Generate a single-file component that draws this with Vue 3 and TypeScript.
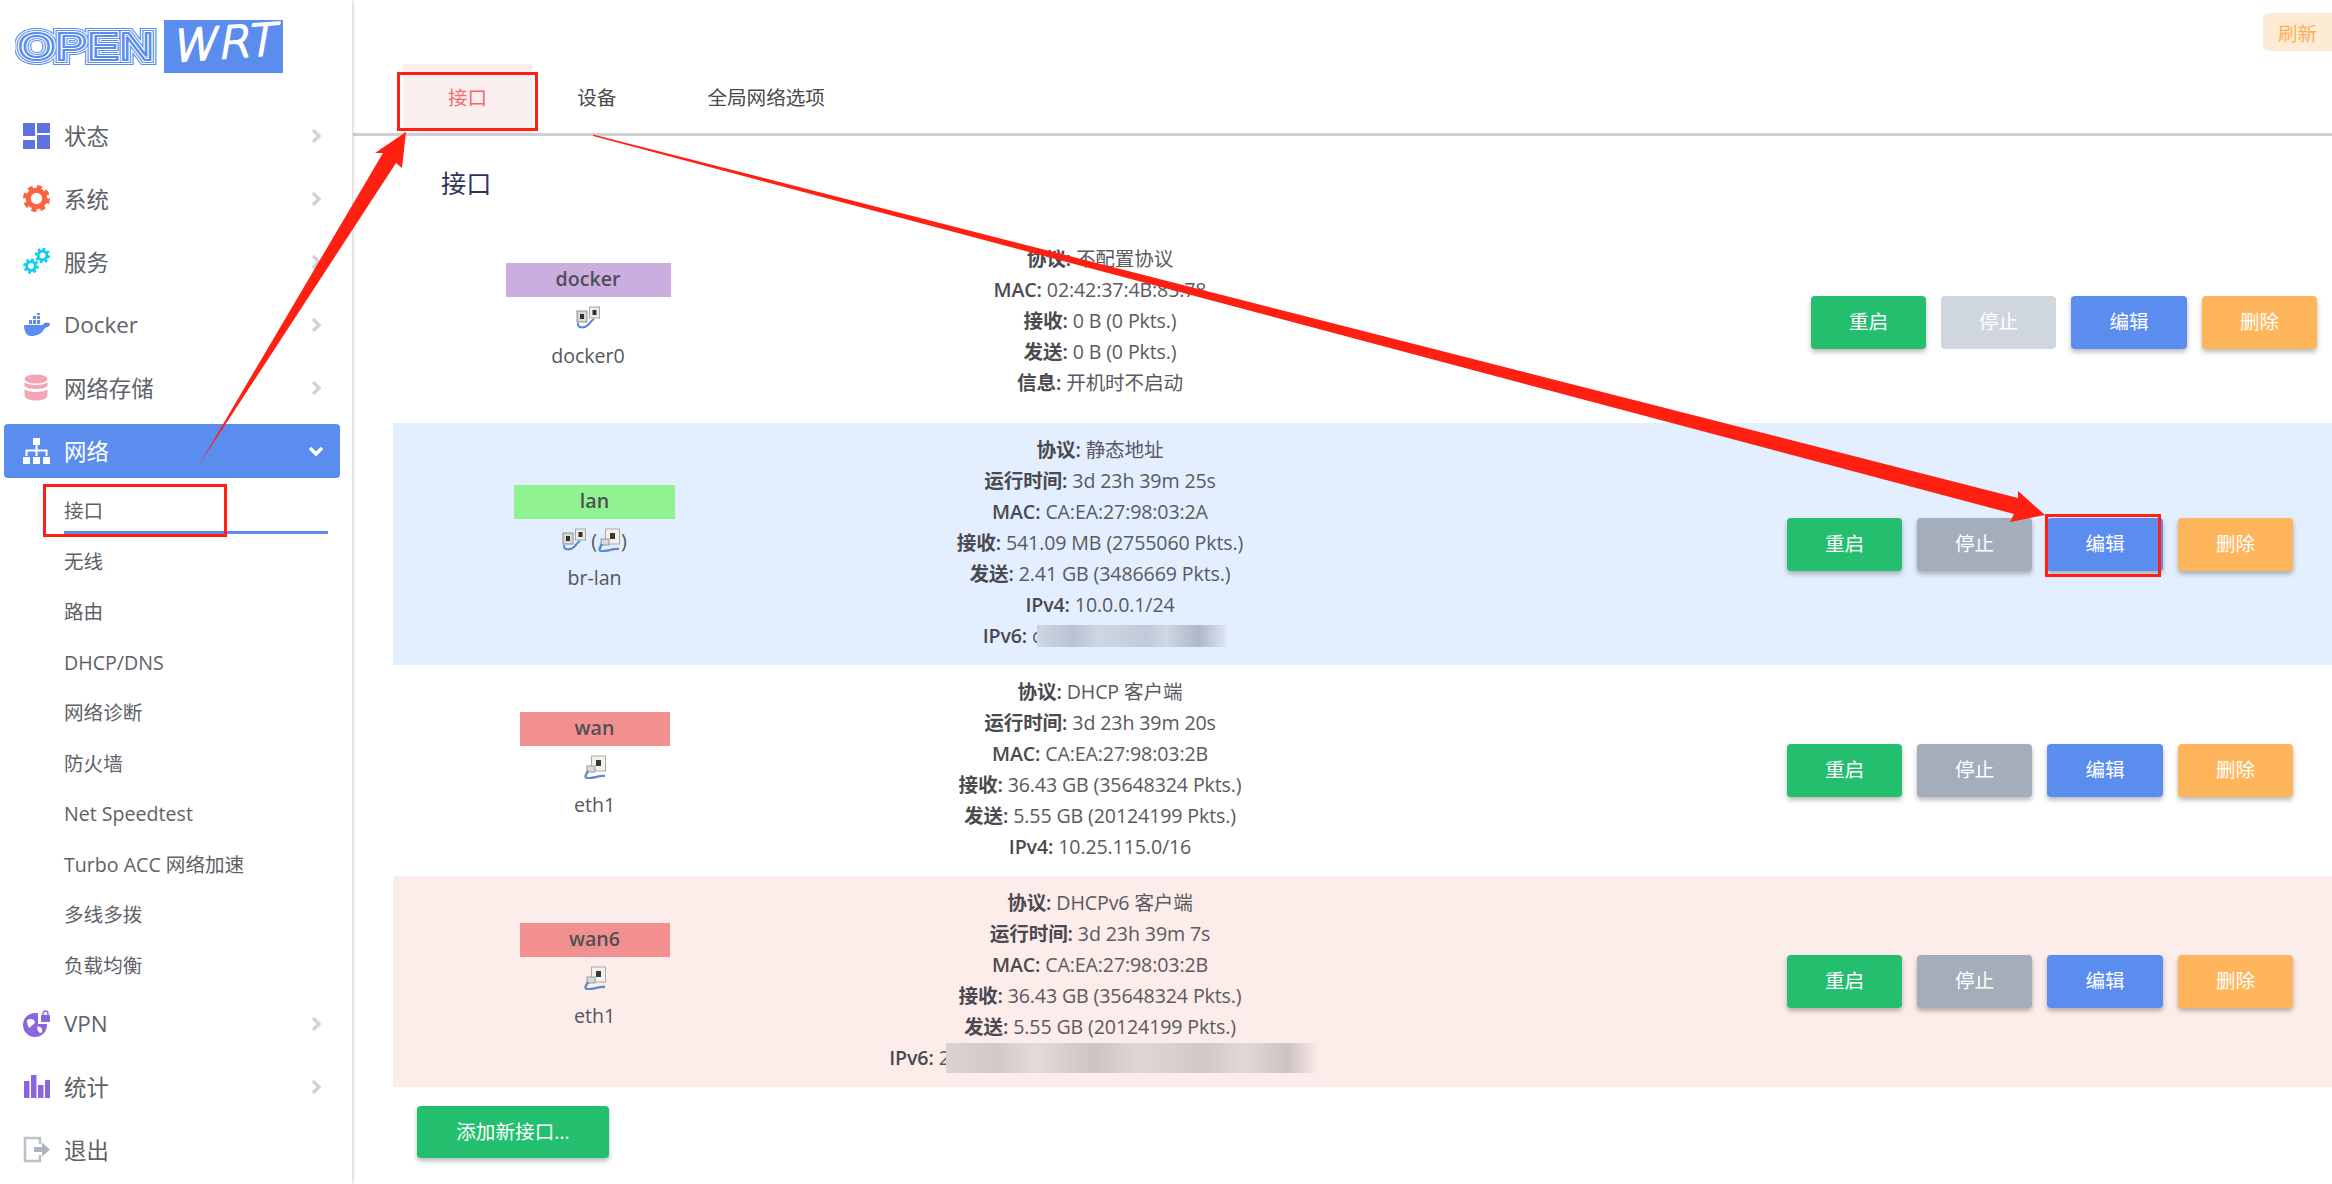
<template>
  <div class="page">
    <svg class="defs" width="0" height="0">
      <defs>
        <g id="port-eth">
          <rect x="8.5" y="1" width="14" height="15" fill="#f1f1ee" stroke="#a9a9a9" />
          <rect x="13" y="5" width="5" height="6" fill="#3d3a2e" />
          <rect x="4" y="11" width="8" height="6" fill="#d9dad8" stroke="#9a9a9a" />
          <path d="M5 16C3 20 1 22 4 23C9 24 16 20 22 21" fill="none" stroke="#5b8cc9" stroke-width="2.4" />
        </g>
        <g id="port-bridge">
          <rect x="1" y="5" width="10" height="11" fill="#d8d8d6" stroke="#8f8f8f" />
          <rect x="13.5" y="1" width="10" height="11" fill="#ececea" stroke="#a5a5a5" />
          <rect x="4" y="8" width="4" height="5" fill="#34322a" />
          <rect x="16.5" y="4" width="4" height="5" fill="#34322a" />
          <path d="M2 17C1 23 9 22 12 19C14 17 15 15 18 13" fill="none" stroke="#4f88cf" stroke-width="2" />
        </g>
      </defs>
    </svg>

    <aside class="sidebar">
      <div class="logo">
        <svg width="272" height="56" viewBox="0 0 272 56">
          <text
            v-for="l in logoLayers"
            :key="l.w"
            class="logo-open"
            x="3"
            y="40"
            textLength="136"
            lengthAdjust="spacingAndGlyphs"
            fill="none"
            :stroke="l.c"
            :stroke-width="l.w"
          >OPEN</text>
          <rect x="149" y="0" width="119" height="53" fill="#5b8def" />
          <text class="logo-wrt" x="0" y="0" transform="translate(156 42) rotate(-4) skewX(-14)" textLength="104" lengthAdjust="spacingAndGlyphs">WRT</text>
        </svg>
      </div>

      <nav class="menu">
        <template v-for="item in menu" :key="item.label">
          <div class="menu-row">
            <a class="menu-link" :class="{ active: item.open }">
              <svg v-if="item.icon === 'status'" class="ico" viewBox="0 0 27 27" fill="#5e72e4">
                <rect x="0" y="1" width="12" height="13" />
                <rect x="14" y="1" width="13" height="10" />
                <rect x="0" y="18" width="12" height="9" />
                <rect x="14" y="13" width="13" height="14" />
              </svg>
              <svg v-else-if="item.icon === 'system'" class="ico" viewBox="0 0 27 27" fill="none" stroke="#fb6340">
                <circle cx="13.5" cy="13.5" r="8.2" stroke-width="5" />
                <circle cx="13.5" cy="13.5" r="11.5" stroke-width="4" stroke-dasharray="5 4.03" />
              </svg>
              <svg v-else-if="item.icon === 'service'" class="ico" viewBox="0 0 27 27" fill="none" stroke="#11cdef">
                <circle cx="8" cy="18" r="4.4" stroke-width="3" />
                <circle cx="8" cy="18" r="6.6" stroke-width="2.4" stroke-dasharray="2.6 2.58" />
                <circle cx="19.5" cy="7.5" r="4.4" stroke-width="3" />
                <circle cx="19.5" cy="7.5" r="6.6" stroke-width="2.4" stroke-dasharray="2.6 2.58" />
              </svg>
              <svg v-else-if="item.icon === 'docker'" class="ico" viewBox="0 0 27 27" fill="#5b8def">
                <path d="M1 14H20C21 11 25 11 28 13C26 16 24 16 22 17C19 23 14 25 8 25C3 25 1 20 1 14Z" />
                <rect x="6" y="9" width="3" height="4" />
                <rect x="10" y="9" width="3" height="4" />
                <rect x="14" y="9" width="3" height="4" />
                <rect x="10" y="5" width="3" height="3" />
                <rect x="14" y="5" width="3" height="3" />
                <rect x="14" y="2" width="3" height="2" />
              </svg>
              <svg v-else-if="item.icon === 'storage'" class="ico" viewBox="0 0 27 27" fill="#f3a4b5">
                <ellipse cx="13" cy="5" rx="11.5" ry="4.5" />
                <path d="M1.5 8C4 12 22 12 24.500 8V12C22 16 4 16 1.500 12Z" />
                <path d="M1.500 15C4 19 22 19 24.500 15V22C22 28 4 28 1.500 22Z" />
              </svg>
              <svg v-else-if="item.icon === 'network'" class="ico" viewBox="0 0 27 27" fill="#fff">
                <rect x="10" y="1" width="7" height="7" />
                <rect x="0" y="20" width="7" height="7" />
                <rect x="10" y="20" width="7" height="7" />
                <rect x="20" y="20" width="7" height="7" />
                <path d="M12.500 8h2v4.500H24.500V19h-2v-4.500h-8V19h-2v-4.500h-8V19h-2v-6.500h10Z" />
              </svg>
              <svg v-else-if="item.icon === 'vpn'" class="ico" viewBox="0 0 27 27">
                <circle cx="12" cy="15" r="12" fill="#8965e0" />
                <path d="M4 10C8 8 11 9 12 12C11 15 8 15 7 18C5 17 4 14 4 10ZM14 17C17 16 20 18 19 22C17 24 15 23 14 17Z" fill="#fff" />
                <rect x="15" y="0" width="13" height="14" fill="#fff" />
                <rect x="18" y="5" width="9" height="7" rx="1" fill="#8965e0" />
                <path d="M20 5V3.500a2.500 2.500 0 0 1 5 0V5" fill="none" stroke="#8965e0" stroke-width="1.400" />
              </svg>
              <svg v-else-if="item.icon === 'stats'" class="ico" viewBox="0 0 27 27" fill="#8965e0">
                <rect x="1" y="8" width="5.500" height="17" />
                <rect x="8" y="2" width="5.500" height="23" />
                <rect x="15" y="12" width="5.500" height="13" />
                <rect x="22" y="7" width="5" height="18" />
              </svg>
              <svg v-else-if="item.icon === 'logout'" class="ico" viewBox="0 0 27 27">
                <path d="M17 8V2H2V25H17V19" fill="none" stroke="#b9c2ca" stroke-width="2.500" />
                <path d="M11 11H19V6.500L27 13.500L19 20.500V16H11Z" fill="#aab5bf" />
              </svg>
              <span class="menu-text">{{ item.label }}</span>
              <svg v-if="item.arrow" class="chev" :class="{ down: item.open }" viewBox="0 0 12 16" fill="none">
                <path d="M3 2L9 8L3 14" stroke-width="3.400" />
              </svg>
            </a>
          </div>
          <div v-if="item.open" class="submenu">
            <a v-for="(s, i) in subItems" :key="s" class="sub-link" :class="{ current: i === 0 }">{{ s }}</a>
          </div>
        </template>
      </nav>
    </aside>

    <main class="content">
      <div class="topbar"><button class="refresh">刷新</button></div>
      <div class="tabs">
        <a v-for="(t, i) in tabs" :key="t" class="tab" :class="{ on: i === 0 }">{{ t }}</a>
      </div>
      <h2 class="title">接口</h2>

      <section
        v-for="r in rows"
        :key="r.name"
        class="row"
        :class="[r.tint, { first: r.first }]"
      >
        <div class="name-col">
          <div class="name-label" :style="{ width: r.labelW + 'px', background: r.color }">{{ r.name }}</div>
          <div class="name-icons">
            <svg v-if="r.bridge" class="port" width="24" height="24"><use href="#port-bridge" /></svg>
            <template v-if="r.bridge && r.eth">&nbsp;(<svg class="port" width="24" height="24"><use href="#port-eth" /></svg>)</template>
            <svg v-else-if="r.eth" class="port" width="24" height="24"><use href="#port-eth" /></svg>
          </div>
          <div class="name-dev">{{ r.dev }}</div>
        </div>

        <div class="info-col">
          <div v-for="l in r.lines" :key="l.k" class="info-line">
            <b>{{ l.k }}:</b> {{ l.v }}<span
              v-if="l.blur"
              class="blur"
              :class="r.tint"
              :style="{ width: l.blur + 'px' }"
            />
          </div>
        </div>

        <div class="actions">
          <button class="btn green">重启</button>
          <button class="btn" :class="r.first ? 'off' : 'gray'">停止</button>
          <button class="btn blue">编辑</button>
          <button class="btn orange">删除</button>
        </div>
      </section>

      <button class="btn green add">添加新接口...</button>
    </main>

    <svg class="marks" width="2332" height="1184" viewBox="0 0 2332 1184">
      <polygon points="199,465 383,153 375,153 406,132 402,168 396,163" fill="#ff2012" />
      <polygon points="593,134.500 2018,498 2018,491 2045,515 2010,522 2014,514 593,136" fill="#ff2012" />
      <rect x="44.500" y="485.500" width="181" height="50" class="box" />
      <rect x="398.500" y="73.500" width="138" height="56" class="box" />
      <rect x="2046.500" y="515.500" width="113" height="60" class="box" />
    </svg>
  </div>
</template>

<script setup lang="ts">
interface MenuItem {
  label: string
  icon: string
  arrow: boolean
  open?: boolean
}

interface InfoLine {
  k: string
  v: string
  blur?: number
}

interface IfaceRow {
  name: string
  dev: string
  color: string
  labelW: number
  bridge: boolean
  eth: boolean
  tint: string
  first?: boolean
  lines: InfoLine[]
}

const logoLayers = [
  { w: 10, c: '#5b8def' },
  { w: 8, c: '#fff' },
  { w: 6, c: '#5b8def' },
  { w: 4, c: '#fff' },
  { w: 2, c: '#5b8def' },
]

const menu: MenuItem[] = [
  { label: '状态', icon: 'status', arrow: true },
  { label: '系统', icon: 'system', arrow: true },
  { label: '服务', icon: 'service', arrow: true },
  { label: 'Docker', icon: 'docker', arrow: true },
  { label: '网络存储', icon: 'storage', arrow: true },
  { label: '网络', icon: 'network', arrow: true, open: true },
  { label: 'VPN', icon: 'vpn', arrow: true },
  { label: '统计', icon: 'stats', arrow: true },
  { label: '退出', icon: 'logout', arrow: false },
]

const subItems = ['接口', '无线', '路由', 'DHCP/DNS', '网络诊断', '防火墙', 'Net Speedtest', 'Turbo ACC 网络加速', '多线多拨', '负载均衡']

const tabs = ['接口', '设备', '全局网络选项']

const rows: IfaceRow[] = [
  {
    name: 'docker', dev: 'docker0', color: '#cbaee0', labelW: 165, bridge: true, eth: false, tint: 'plain', first: true,
    lines: [
      { k: '协议', v: '不配置协议' },
      { k: 'MAC', v: '02:42:37:4B:83:78' },
      { k: '接收', v: '0 B (0 Pkts.)' },
      { k: '发送', v: '0 B (0 Pkts.)' },
      { k: '信息', v: '开机时不启动' },
    ],
  },
  {
    name: 'lan', dev: 'br-lan', color: '#90f290', labelW: 161, bridge: true, eth: true, tint: 'sky',
    lines: [
      { k: '协议', v: '静态地址' },
      { k: '运行时间', v: '3d 23h 39m 25s' },
      { k: 'MAC', v: 'CA:EA:27:98:03:2A' },
      { k: '接收', v: '541.09 MB (2755060 Pkts.)' },
      { k: '发送', v: '2.41 GB (3486669 Pkts.)' },
      { k: 'IPv4', v: '10.0.0.1/24' },
      { k: 'IPv6', v: 'c', blur: 190 },
    ],
  },
  {
    name: 'wan', dev: 'eth1', color: '#f29090', labelW: 150, bridge: false, eth: true, tint: 'plain',
    lines: [
      { k: '协议', v: 'DHCP 客户端' },
      { k: '运行时间', v: '3d 23h 39m 20s' },
      { k: 'MAC', v: 'CA:EA:27:98:03:2B' },
      { k: '接收', v: '36.43 GB (35648324 Pkts.)' },
      { k: '发送', v: '5.55 GB (20124199 Pkts.)' },
      { k: 'IPv4', v: '10.25.115.0/16' },
    ],
  },
  {
    name: 'wan6', dev: 'eth1', color: '#f29090', labelW: 150, bridge: false, eth: true, tint: 'rose',
    lines: [
      { k: '协议', v: 'DHCPv6 客户端' },
      { k: '运行时间', v: '3d 23h 39m 7s' },
      { k: 'MAC', v: 'CA:EA:27:98:03:2B' },
      { k: '接收', v: '36.43 GB (35648324 Pkts.)' },
      { k: '发送', v: '5.55 GB (20124199 Pkts.)' },
      { k: 'IPv6', v: '2', blur: 371 },
    ],
  },
]
</script>

<style>
html,
body {
  margin: 0;
  background: #fff;
}
</style>

<style scoped>
.page {
  position: relative;
  display: flex;
  width: 2332px;
  height: 1184px;
  overflow: hidden;
  background: #fff;
  font-family: "Open Sans", "Noto Sans CJK SC", sans-serif;
  font-size: 19.6px;
  color: #525f7f;
}

.defs {
  position: absolute;
}

.sidebar {
  flex: 0 0 352px;
  height: 100%;
  background: #fff;
  box-shadow: 0 0 4px rgba(0, 0, 0, 0.3);
  z-index: 1;
}

.logo {
  height: 104px;
  box-sizing: border-box;
  padding: 20px 0 0 15px;
}

.logo-open {
  font-family: "Liberation Sans", sans-serif;
  font-size: 38px;
}

.logo-wrt {
  font-family: "DejaVu Sans", sans-serif;
  font-weight: 200;
  font-size: 44px;
  fill: #fff;
  stroke: #fff;
  stroke-width: 2;
  stroke-linejoin: round;
}

.menu-row {
  height: 63px;
  display: flex;
  align-items: center;
}

.menu-link {
  display: flex;
  align-items: center;
  width: 336px;
  height: 54px;
  margin-left: 4px;
  box-sizing: border-box;
  padding-left: 19px;
  border-radius: 4px;
  color: #5e6168;
  font-size: 22.4px;
}

.menu-link.active {
  background: #5b8def;
  color: #fff;
}

.ico {
  flex: 0 0 27px;
  width: 27px;
  height: 27px;
}

.menu-text {
  margin-left: 14px;
}

.chev {
  margin-left: auto;
  margin-right: 18px;
  width: 12px;
  height: 16px;
  stroke: #ced4da;
}

.chev.down {
  transform: rotate(90deg);
  stroke: #fff;
}

.submenu {
  padding: 3px 0 2px;
}

.sub-link {
  display: block;
  box-sizing: border-box;
  height: 48.5px;
  margin: 0 24px 2px 64px;
  line-height: 52px;
  color: #5e6168;
}

.sub-link.current {
  border-bottom: 3px solid #5b8def;
}

.content {
  flex: 1;
  min-width: 0;
  margin-left: 1px;
}

.topbar {
  height: 64px;
  display: flex;
  justify-content: flex-end;
  align-items: flex-start;
}

.refresh {
  margin-top: 13px;
  width: 69px;
  height: 38px;
  border: 0;
  border-radius: 6px 0 0 6px;
  background: #fdebd5;
  color: #fbb05a;
  font: inherit;
}

.tabs {
  display: flex;
  height: 69px;
  padding-left: 50px;
  border-bottom: 3px solid #cfcfcf;
}

.tab {
  padding: 0 46px 0 45px;
  line-height: 67px;
  color: #4a4a4a;
}

.tab.on {
  background: #fbeeee;
  color: #f5686c;
  padding-right: 45px;
}

.title {
  margin: 0;
  height: 96px;
  padding: 24px 0 0 88px;
  box-sizing: border-box;
  font-size: 25.2px;
  line-height: 46px;
  font-weight: 400;
  color: #32325d;
}

.row {
  display: grid;
  grid-template-columns: 403px 608px 1fr;
  align-items: center;
  margin-left: 40px;
  padding: 12.5px 0;
}

.row.first {
  margin-bottom: 11px;
}

.row.sky {
  background: #e3eefe;
}

.row.rose {
  background: #fcecea;
}

.name-col {
  display: flex;
  flex-direction: column;
  align-items: center;
  height: 118px;
  color: #55565c;
}

.row.first .name-col {
  padding-right: 13px;
}

.name-label {
  height: 34px;
  flex: none;
  line-height: 32px;
  text-align: center;
  font-weight: 600;
  color: #4f5055;
}

.name-icons {
  display: flex;
  align-items: center;
  height: 30px;
  margin-top: 6px;
}

.port {
  display: block;
  flex: none;
}

.name-dev {
  margin-top: 7px;
  line-height: 31px;
}

.info-col {
  text-align: center;
  color: #5a5a60;
  letter-spacing: -0.12px;
}

.info-line {
  height: 31px;
  line-height: 27px;
  white-space: nowrap;
}

.info-line b {
  font-weight: 600;
  color: #4a4a50;
}

.blur {
  display: inline-block;
  vertical-align: middle;
  margin-top: -2px;
  margin-left: -4px;
}

.blur.sky {
  height: 22px;
  margin-right: -10px;
  background: linear-gradient(90deg, #cdd5e2, #b9c3d2 20%, #ced6e3 32%, #c0cad8 58%, #cfd7e4 68%, #adb7c7 85%, #e0e8f5);
}

.blur.rose {
  height: 30px;
  margin-right: -6px;
  background: linear-gradient(90deg, #ddd2d2, #d3c9c9 14%, #e4dada 24%, #cfc4c4 40%, #e0d6d6 52%, #d2c8c8 70%, #e2d8d8 80%, #cdc3c3 92%, #f7e9e7);
}

.actions {
  display: flex;
  justify-content: flex-end;
  gap: 15px;
  padding-right: 39px;
}

.row.first .actions {
  padding-right: 15px;
}

.btn {
  width: 115px;
  height: 53px;
  border: 0;
  border-radius: 4px;
  padding: 0 0 4px;
  color: #fff;
  font: inherit;
  box-shadow: 0 3px 5px rgba(0, 0, 0, 0.28);
}

.btn.green {
  background: #23bf6f;
}

.btn.gray {
  background: #a3aeba;
}

.btn.off {
  background: #cfd6de;
  box-shadow: none;
}

.btn.blue {
  width: 116px;
  background: #5b8def;
}

.btn.orange {
  background: #ffb55c;
}

.btn.add {
  display: block;
  width: 192px;
  height: 52px;
  margin: 19px 0 0 64px;
}

.marks {
  position: absolute;
  top: 0;
  left: 0;
  z-index: 2;
  pointer-events: none;
}

.box {
  fill: none;
  stroke: #ff2012;
  stroke-width: 3;
}
</style>
